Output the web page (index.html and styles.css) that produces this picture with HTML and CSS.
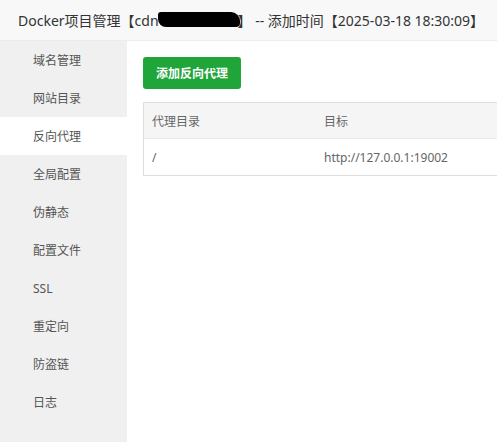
FILE: index.html
```html
<!DOCTYPE html>
<html lang="zh-CN">
<head>
<meta charset="utf-8">
<title>Docker项目管理</title>
<link rel="stylesheet" href="styles.css">
</head>
<body>
<div class="titlebar">Docker项目管理【cdn<span class="redact"></span>】 -- 添加时间【2025-03-18 18:30:09】</div>
<div class="layout">
  <nav class="sidebar">
    <div class="nav-item">域名管理</div>
    <div class="nav-item">网站目录</div>
    <div class="nav-item active">反向代理</div>
    <div class="nav-item">全局配置</div>
    <div class="nav-item">伪静态</div>
    <div class="nav-item">配置文件</div>
    <div class="nav-item">SSL</div>
    <div class="nav-item">重定向</div>
    <div class="nav-item">防盗链</div>
    <div class="nav-item">日志</div>
  </nav>
  <main class="main">
    <button class="btn-green">添加反向代理</button>
    <div class="table">
      <div class="row head">
        <div class="cell c1">代理目录</div>
        <div class="cell c2">目标</div>
      </div>
      <div class="row">
        <div class="cell c1">/</div>
        <div class="cell c2">http://127.0.0.1:19002</div>
      </div>
    </div>
  </main>
</div>
</body>
</html>
```
FILE: styles.css
```css
* { box-sizing: border-box; }
html, body { margin: 0; padding: 0; background: #fff; }
body {
  font-family: "Noto Sans", "Noto Sans CJK SC", sans-serif;
  width: 497px;
  height: 442px;
  overflow: hidden;
}
.titlebar {
  height: 41px;
  line-height: 40px;
  padding-top: 1px;
  padding-left: 18px;
  font-size: 14px;
  color: #333;
  background: #f8f8f8;
  border-bottom: 1px solid #ececec;
  white-space: nowrap;
}
.redact {
  display: inline-block;
  width: 82px;
  height: 15px;
  background: #000;
  border-radius: 3px 9px 4px 8px;
  vertical-align: -1px;
  margin-left: -1px;
  margin-right: -2px;
}
.layout {
  display: flex;
  height: 401px;
}
.sidebar {
  width: 127px;
  flex: none;
  background: #f0f0f0;
}
.nav-item {
  height: 38px;
  line-height: 38px;
  padding-top: 1px;
  padding-left: 33px;
  font-size: 12px;
  color: #555;
}
.nav-item.active { background: #fff; }
.main {
  flex: 1;
  min-width: 0;
  overflow: hidden;
  padding: 16px 0 0 16px;
}
.btn-green {
  display: block;
  height: 32px;
  width: 98px;
  padding: 0;
  border: none;
  border-radius: 3px;
  background: #20a53a;
  color: #fff;
  font-family: inherit;
  font-size: 12px;
  font-weight: 700;
  margin-bottom: 13px;
}
.table {
  width: 600px;
  border: 1px solid #dedede;
  border-right: none;
}
.row {
  display: flex;
  height: 37px;
  align-items: center;
  font-size: 12px;
  color: #666;
  border-top: 1px solid #e9ebf0;
  padding-top: 1px;
}
.row.head {
  height: 35px;
  border-top: none;
  background: #f5f5f5;
}
.cell { padding-left: 8px; }
.c1 { width: 172px; }
.c2 { flex: 1; }
```
